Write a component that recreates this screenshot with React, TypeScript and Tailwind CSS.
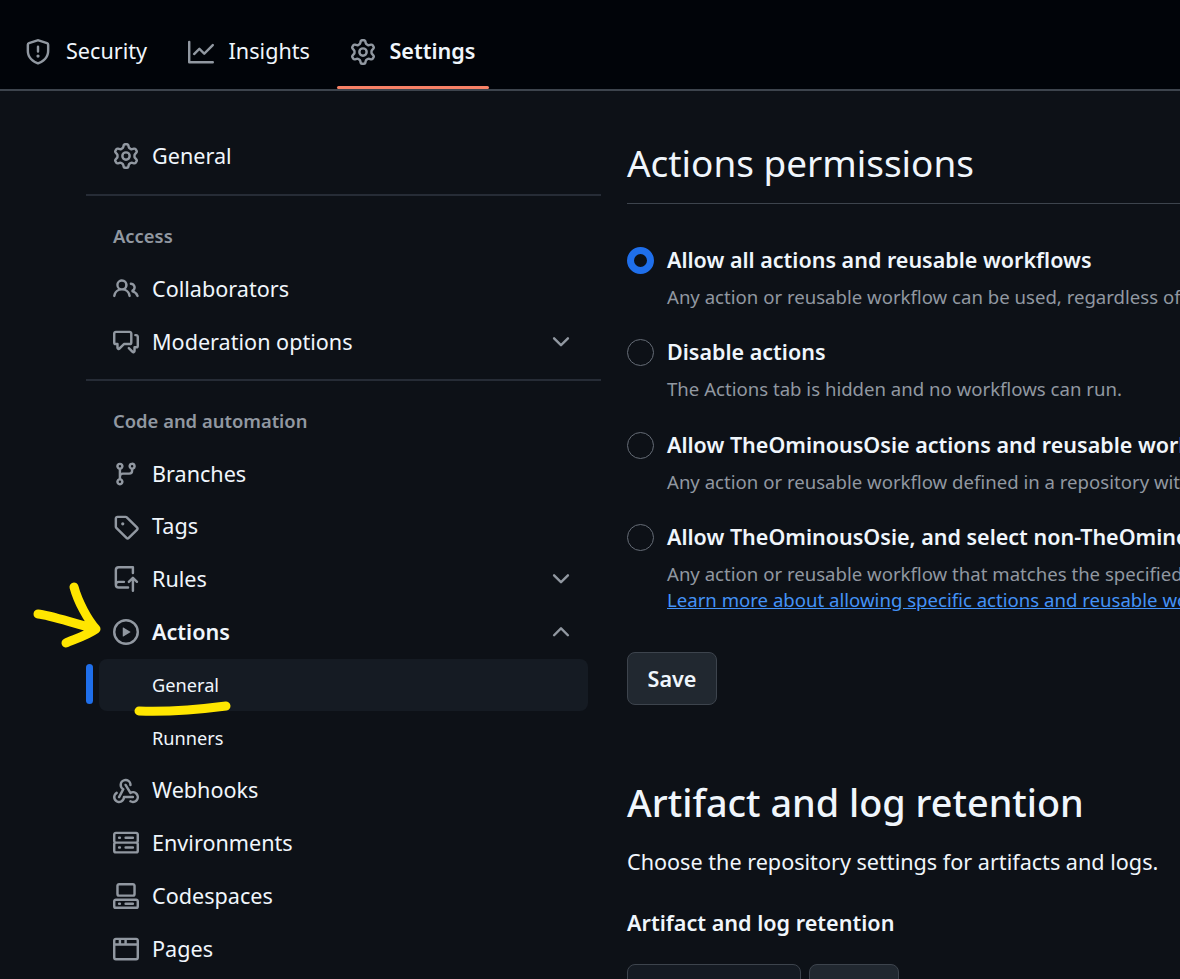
import type { ReactNode } from "react"

// octicons, 16px grid
const icons: Record<string, string[]> = {
  shield: ["M7.467.133a1.748 1.748 0 0 1 1.066 0l5.25 1.68A1.75 1.75 0 0 1 15 3.48V7c0 1.566-.32 3.182-1.303 4.682-.983 1.498-2.585 2.813-5.032 3.855a1.697 1.697 0 0 1-1.33 0c-2.447-1.042-4.049-2.357-5.032-3.855C1.32 10.182 1 8.566 1 7V3.48a1.75 1.75 0 0 1 1.217-1.667Zm.61 1.429a.25.25 0 0 0-.153 0l-5.25 1.68a.25.25 0 0 0-.174.238V7c0 1.358.275 2.666 1.057 3.86.784 1.194 2.121 2.34 4.366 3.297a.196.196 0 0 0 .154 0c2.245-.956 3.582-2.104 4.366-3.298C13.225 9.666 13.5 8.36 13.5 7V3.48a.251.251 0 0 0-.174-.237l-5.25-1.68ZM8.75 4.75v3a.75.75 0 0 1-1.5 0v-3a.75.75 0 0 1 1.5 0ZM9 10.5a1 1 0 1 1-2 0 1 1 0 0 1 2 0Z"],
  graph: ["M1.5 1.75V13.5h13.75a.75.75 0 0 1 0 1.5H.75a.75.75 0 0 1-.75-.75V1.75a.75.75 0 0 1 1.5 0Zm14.28 2.53-5.25 5.25a.75.75 0 0 1-1.06 0L7 7.06 4.28 9.78a.751.751 0 0 1-1.042-.018.751.751 0 0 1-.018-1.042l3.25-3.25a.75.75 0 0 1 1.06 0L10 7.94l4.72-4.72a.751.751 0 0 1 1.042.018.751.751 0 0 1 .018 1.042Z"],
  gear: ["M8 0a8.2 8.2 0 0 1 .701.031C9.444.095 9.99.645 10.16 1.29l.288 1.107c.018.066.079.158.212.224.231.114.454.243.668.386.123.082.233.09.299.071l1.103-.303c.644-.176 1.392.021 1.82.63.27.385.506.792.704 1.218.315.675.111 1.422-.364 1.891l-.814.806c-.049.048-.098.147-.088.294.016.257.016.515 0 .772-.01.147.038.246.088.294l.814.806c.475.469.679 1.216.364 1.891a7.977 7.977 0 0 1-.704 1.217c-.428.61-1.176.807-1.82.63l-1.102-.302c-.067-.019-.177-.011-.3.071a5.909 5.909 0 0 1-.668.386c-.133.066-.194.158-.211.224l-.29 1.106c-.168.646-.715 1.196-1.458 1.26a8.006 8.006 0 0 1-1.402 0c-.743-.064-1.289-.614-1.458-1.26l-.289-1.106c-.018-.066-.079-.158-.212-.224a5.738 5.738 0 0 1-.668-.386c-.123-.082-.233-.09-.299-.071l-1.103.303c-.644.176-1.392-.021-1.82-.63a8.12 8.12 0 0 1-.704-1.218c-.315-.675-.111-1.422.363-1.891l.815-.806c.05-.048.098-.147.088-.294a6.214 6.214 0 0 1 0-.772c.01-.147-.038-.246-.088-.294l-.815-.806C.635 6.045.431 5.298.746 4.623a7.92 7.92 0 0 1 .704-1.217c.428-.61 1.176-.807 1.82-.63l1.102.302c.067.019.177.011.3-.071.214-.143.437-.272.668-.386.133-.066.194-.158.211-.224l.29-1.106C6.009.645 6.556.095 7.299.03 7.53.01 7.764 0 8 0Zm-.571 1.525c-.036.003-.108.036-.137.146l-.289 1.105c-.147.561-.549.967-.998 1.189-.173.086-.34.183-.5.29-.417.278-.97.423-1.529.27l-1.103-.303c-.109-.03-.175.016-.195.045-.22.312-.412.644-.573.99-.014.031-.021.11.059.19l.815.806c.411.406.562.957.53 1.456a4.709 4.709 0 0 0 0 .582c.032.499-.119 1.05-.53 1.456l-.815.806c-.081.08-.073.159-.059.19.162.346.353.677.573.989.02.03.085.076.195.046l1.102-.303c.56-.153 1.113-.008 1.53.27.161.107.328.204.501.29.447.222.85.629.997 1.189l.289 1.105c.029.109.101.143.137.146a6.6 6.6 0 0 0 1.142 0c.036-.003.108-.036.137-.146l.289-1.105c.147-.561.549-.967.998-1.189.173-.086.34-.183.5-.29.417-.278.97-.423 1.529-.27l1.103.303c.109.029.175-.016.195-.045.22-.313.411-.644.573-.99.014-.031.021-.11-.059-.19l-.815-.806c-.411-.406-.562-.957-.53-1.456a4.709 4.709 0 0 0 0-.582c-.032-.499.119-1.05.53-1.456l.815-.806c.081-.08.073-.159.059-.19a6.464 6.464 0 0 0-.573-.989c-.02-.03-.085-.076-.195-.046l-1.102.303c-.56.153-1.113.008-1.53-.27a4.44 4.44 0 0 0-.501-.29c-.447-.222-.85-.629-.997-1.189l-.289-1.105c-.029-.11-.101-.143-.137-.146a6.6 6.6 0 0 0-1.142 0ZM11 8a3 3 0 1 1-6 0 3 3 0 0 1 6 0ZM9.5 8a1.5 1.5 0 1 0-3.001.001A1.5 1.5 0 0 0 9.5 8Z"],
  people: ["M2 5.5a3.5 3.5 0 1 1 5.898 2.549 5.508 5.508 0 0 1 3.034 4.084.75.75 0 1 1-1.482.235 4 4 0 0 0-7.9 0 .75.75 0 0 1-1.482-.236A5.507 5.507 0 0 1 3.102 8.05 3.493 3.493 0 0 1 2 5.5ZM11 4a3.001 3.001 0 0 1 2.22 5.018 5.01 5.01 0 0 1 2.56 3.012.749.749 0 0 1-.885.954.752.752 0 0 1-.549-.514 3.507 3.507 0 0 0-2.522-2.372.75.75 0 0 1-.574-.73v-.352a.75.75 0 0 1 .416-.672A1.5 1.5 0 0 0 11 5.5.75.75 0 0 1 11 4Zm-5.5-.5a2 2 0 1 0-.001 3.999A2 2 0 0 0 5.5 3.5Z"],
  discussion: ["M1.75 1h8.5c.966 0 1.75.784 1.75 1.75v5.5A1.75 1.75 0 0 1 10.25 10H7.061l-2.574 2.573A1.458 1.458 0 0 1 2 11.543V10h-.25A1.75 1.75 0 0 1 0 8.25v-5.5C0 1.784.784 1 1.75 1ZM1.5 2.75v5.5c0 .138.112.25.25.25h1a.75.75 0 0 1 .75.75v2.19l2.72-2.72a.749.749 0 0 1 .53-.22h3.5a.25.25 0 0 0 .25-.25v-5.5a.25.25 0 0 0-.25-.25h-8.5a.25.25 0 0 0-.25.25Zm13 2a.25.25 0 0 0-.25-.25h-.5a.75.75 0 0 1 0-1.5h.5c.966 0 1.75.784 1.75 1.75v5.5A1.75 1.75 0 0 1 14.25 12H14v1.543a1.458 1.458 0 0 1-2.487 1.03L9.22 12.28a.749.749 0 0 1 .326-1.275.749.749 0 0 1 .734.215l2.22 2.22v-2.19a.75.75 0 0 1 .75-.75h1a.25.25 0 0 0 .25-.25Z"],
  branch: ["M9.5 3.25a2.25 2.25 0 1 1 3 2.122V6A2.5 2.5 0 0 1 10 8.5H6a1 1 0 0 0-1 1v1.128a2.251 2.251 0 1 1-1.5 0V5.372a2.25 2.25 0 1 1 1.5 0v1.836A2.493 2.493 0 0 1 6 7h4a1 1 0 0 0 1-1v-.628A2.25 2.25 0 0 1 9.5 3.25Zm-6 0a.75.75 0 1 0 1.5 0 .75.75 0 0 0-1.5 0Zm8.25-.75a.75.75 0 1 0 0 1.5.75.75 0 0 0 0-1.5ZM4.25 12a.75.75 0 1 0 0 1.5.75.75 0 0 0 0-1.5Z"],
  tag: ["M1 7.775V2.75C1 1.784 1.784 1 2.75 1h5.025c.464 0 .91.184 1.238.513l6.25 6.25a1.75 1.75 0 0 1 0 2.474l-5.026 5.026a1.75 1.75 0 0 1-2.474 0l-6.25-6.25A1.752 1.752 0 0 1 1 7.775Zm1.5 0c0 .066.026.13.073.177l6.25 6.25a.25.25 0 0 0 .354 0l5.025-5.025a.25.25 0 0 0 0-.354l-6.25-6.25a.25.25 0 0 0-.177-.073H2.75a.25.25 0 0 0-.25.25ZM6 5a1 1 0 1 1 0 2 1 1 0 0 1 0-2Z"],
  repoPush: ["M1 2.5A2.5 2.5 0 0 1 3.5 0h8.75a.75.75 0 0 1 .75.75v3.5a.75.75 0 0 1-1.5 0V1.5h-8a1 1 0 0 0-1 1v6.708A2.492 2.492 0 0 1 3.5 9h3.25a.75.75 0 0 1 0 1.5H3.5a1 1 0 0 0 0 2h5.75a.75.75 0 0 1 0 1.5H3.5A2.5 2.5 0 0 1 1 11.5Zm13.23 7.79h-.001l-1.224-1.224v6.184a.75.75 0 0 1-1.5 0V9.066L10.28 10.29a.75.75 0 0 1-1.06-1.061l2.505-2.504a.75.75 0 0 1 1.06 0L15.29 9.23a.751.751 0 0 1-.018 1.042.751.751 0 0 1-1.042.018Z"],
  play: ["M8 0a8 8 0 1 1 0 16A8 8 0 0 1 8 0ZM1.5 8a6.5 6.5 0 1 0 13 0 6.5 6.5 0 0 0-13 0Zm4.879-2.773 4.264 2.559a.25.25 0 0 1 0 .428l-4.264 2.559A.25.25 0 0 1 6 10.559V5.442a.25.25 0 0 1 .379-.215Z"],
  webhook: [
    "M5.5 4.25a2.25 2.25 0 0 1 4.5 0 .75.75 0 0 0 1.5 0 3.75 3.75 0 1 0-6.14 2.889l-2.272 4.258a.75.75 0 0 0 1.324.706L7 7.25a.75.75 0 0 0-.309-1.015A2.25 2.25 0 0 1 5.5 4.25Z",
    "M7.364 3.607a.75.75 0 0 1 1.03.257l2.608 4.349a3.75 3.75 0 1 1-.628 6.785.75.75 0 0 1 .752-1.299 2.25 2.25 0 1 0-.033-3.88.75.75 0 0 1-1.03-.256L7.107 4.636a.75.75 0 0 1 .257-1.03Z",
    "M2.9 8.776A.75.75 0 0 1 2.625 9.8 2.25 2.25 0 1 0 6 11.75a.75.75 0 0 1 .75-.751h5.5a.75.75 0 0 1 0 1.5H7.425a3.751 3.751 0 1 1-5.55-3.998.75.75 0 0 1 1.024.274Z",
  ],
  server: ["M1.75 1h12.5c.966 0 1.75.784 1.75 1.75v4c0 .372-.116.717-.314 1 .198.283.314.628.314 1v4a1.75 1.75 0 0 1-1.75 1.75H1.75A1.75 1.75 0 0 1 0 12.75v-4c0-.358.109-.707.314-1a1.739 1.739 0 0 1-.314-1v-4C0 1.784.784 1 1.75 1ZM1.5 2.75v4c0 .138.112.25.25.25h12.5a.25.25 0 0 0 .25-.25v-4a.25.25 0 0 0-.25-.25H1.75a.25.25 0 0 0-.25.25Zm.25 5.75a.25.25 0 0 0-.25.25v4c0 .138.112.25.25.25h12.5a.25.25 0 0 0 .25-.25v-4a.25.25 0 0 0-.25-.25ZM7 4.75A.75.75 0 0 1 7.75 4h4.5a.75.75 0 0 1 0 1.5h-4.5A.75.75 0 0 1 7 4.75ZM7.75 10h4.5a.75.75 0 0 1 0 1.5h-4.5a.75.75 0 0 1 0-1.5ZM3 4.75A.75.75 0 0 1 3.75 4h.5a.75.75 0 0 1 0 1.5h-.5A.75.75 0 0 1 3 4.75ZM3.75 10h.5a.75.75 0 0 1 0 1.5h-.5a.75.75 0 0 1 0-1.5Z"],
  codespaces: [
    "M0 11.25c0-.966.784-1.75 1.75-1.75h12.5c.966 0 1.75.784 1.75 1.75v3A1.75 1.75 0 0 1 14.25 16H1.75A1.75 1.75 0 0 1 0 14.25Zm2-9.5C2 .784 2.784 0 3.75 0h8.5C13.216 0 14 .784 14 1.75v5a1.75 1.75 0 0 1-1.75 1.75h-8.5A1.75 1.75 0 0 1 2 6.75Zm1.75-.25a.25.25 0 0 0-.25.25v5c0 .138.112.25.25.25h8.5a.25.25 0 0 0 .25-.25v-5a.25.25 0 0 0-.25-.25Zm-2 9.5a.25.25 0 0 0-.25.25v3c0 .138.112.25.25.25h12.5a.25.25 0 0 0 .25-.25v-3a.25.25 0 0 0-.25-.25Z",
    "M7 12.75a.75.75 0 0 1 .75-.75h4.5a.75.75 0 0 1 0 1.5h-4.5a.75.75 0 0 1-.75-.75Zm-4 0a.75.75 0 0 1 .75-.75h.5a.75.75 0 0 1 0 1.5h-.5a.75.75 0 0 1-.75-.75Z",
  ],
  browser: ["M0 2.75C0 1.784.784 1 1.75 1h12.5c.966 0 1.75.784 1.75 1.75v10.5A1.75 1.75 0 0 1 14.25 15H1.75A1.75 1.75 0 0 1 0 13.25ZM14.5 6h-13v7.25c0 .138.112.25.25.25h12.5a.25.25 0 0 0 .25-.25Zm-6-3.5v2h6V2.75a.25.25 0 0 0-.25-.25ZM5 2.5v2h2v-2Zm-3.25 0a.25.25 0 0 0-.25.25V4.5h2v-2Z"],
  chevronDown: ["M12.78 5.22a.749.749 0 0 1 0 1.06l-4.25 4.25a.749.749 0 0 1-1.06 0L3.22 6.28a.749.749 0 1 1 1.06-1.06L8 8.939l3.72-3.719a.749.749 0 0 1 1.06 0Z"],
  chevronUp: ["M3.22 10.53a.749.749 0 0 1 0-1.06l4.25-4.25a.749.749 0 0 1 1.06 0l4.25 4.25a.749.749 0 1 1-1.06 1.06L8 6.811 4.28 10.53a.749.749 0 0 1-1.06 0Z"],
}

function Octicon({ name, className }: { name: string; className?: string }) {
  return (
    <svg width="26" height="26" viewBox="0 0 16 16" fill="currentColor" className={`block ${className ?? ""}`}>
      {icons[name].map((d) => <path key={d} d={d} />)}
    </svg>
  )
}

function TopTab({ icon, label, active }: { icon: ReactNode; label: string; active?: boolean }) {
  return (
    <div className={`relative flex h-full items-center px-[13px] pt-[14px] text-[#f0f6fc] ${active ? "gap-[13px]" : "gap-[15px]"}`}>
      <span className="text-[#9198a1]">{icon}</span>
      <span className={active ? "font-semibold" : ""}>{label}</span>
      {active && <span className="absolute bottom-0 left-0 right-0 h-[3px] rounded-full bg-[#f78166]" />}
    </div>
  )
}

function SideItem({ icon, label, chevron, bold }: { icon?: string; label: string; chevron?: "up" | "down"; bold?: boolean }) {
  return (
    <div className="flex h-[52.8px] items-center px-[27px] text-[#f0f6fc]">
      <span className="flex w-[39px] shrink-0 text-[#9198a1]">{icon && <Octicon name={icon} />}</span>
      <span className={bold ? "font-semibold" : ""}>{label}</span>
      {chevron === "down" && <Octicon name="chevronDown" className="ml-auto text-[#9198a1]" />}
      {chevron === "up" && <Octicon name="chevronUp" className="ml-auto text-[#9198a1]" />}
    </div>
  )
}

function SubItem({ label, active }: { label: string; active?: boolean }) {
  return (
    <div className="relative h-[52.8px]">
      {active && <span className="absolute left-0 top-[5px] h-[40px] w-[7px] rounded-full bg-[#1f6feb]" />}
      <div className={`ml-[13px] mr-[13px] flex h-full items-center rounded-[8px] pl-[53px] pt-[2px] text-[18.2px] text-[#f0f6fc] ${active ? "bg-[#151b23]" : ""}`}>
        {label}
      </div>
    </div>
  )
}

function SideLabel({ label }: { label: string }) {
  return <div className="px-[27px] text-[18.4px] font-semibold leading-[22px] text-[#9198a1]">{label}</div>
}

function RadioOption({ title, note, checked, link, className }: { title: string; note: string; checked?: boolean; link?: string; className?: string }) {
  return (
    <div className={`flex gap-[13px] ${className ?? ""}`}>
      {checked ? (
        <span className="mt-[-13px] h-[27px] w-[27px] shrink-0 rounded-full border-[7px] border-[#1f6feb] bg-[#0d1117]" />
      ) : (
        <span className="mt-[-13px] h-[27px] w-[27px] shrink-0 rounded-full border border-[#656c76]" />
      )}
      <div className="mt-[-14px] whitespace-nowrap">
        <div className="text-[21.5px] font-semibold leading-[28px] text-[#f0f6fc]">{title}</div>
        <div className="mt-[10px] text-[18.6px] leading-[26px] text-[#9198a1]">{note}</div>
        {link && <div className="text-[18.6px] leading-[26px] text-[#4493f8] underline">{link}</div>}
      </div>
    </div>
  )
}

export default function App() {
  return (
    <div className="relative h-[979px] w-[1180px] overflow-hidden bg-[#0d1117] text-[21.6px]" style={{ fontFamily: '"Noto Sans", sans-serif' }}>
      <header className="flex h-[91px] items-stretch border-b-2 border-[#3d444d] bg-[#010409] pl-[12px]">
        <div className="flex h-[89px] gap-[14.5px]">
          <TopTab icon={<Octicon name="shield" />} label="Security" />
          <TopTab icon={<Octicon name="graph" />} label="Insights" />
          <TopTab icon={<Octicon name="gear" />} label="Settings" active />
        </div>
      </header>

      <div className="flex">
        <aside className="ml-[86px] w-[515px] shrink-0 pt-[39px]">
          <SideItem icon="gear" label="General" />
          <div className="mt-[11px] h-[2px] bg-[#262c36]" />
          <div className="mt-[29px]"><SideLabel label="Access" /></div>
          <div className="mt-[16px]">
            <SideItem icon="people" label="Collaborators" />
            <SideItem icon="discussion" label="Moderation options" chevron="down" />
          </div>
          <div className="mt-[11px] h-[2px] bg-[#262c36]" />
          <div className="mt-[29px]"><SideLabel label="Code and automation" /></div>
          <div className="mt-[15px]">
            <SideItem icon="branch" label="Branches" />
            <SideItem icon="tag" label="Tags" />
            <SideItem icon="repoPush" label="Rules" chevron="down" />
            <SideItem icon="play" label="Actions" chevron="up" bold />
            <SubItem label="General" active />
            <SubItem label="Runners" />
            <SideItem icon="webhook" label="Webhooks" />
            <SideItem icon="server" label="Environments" />
            <SideItem icon="codespaces" label="Codespaces" />
            <SideItem icon="browser" label="Pages" />
          </div>
        </aside>

        <main className="ml-[26px] w-[700px] shrink-0 text-[#f0f6fc]">
          <h2 className="mt-[46px] h-[67px] border-b border-[#3d444d] text-[36.9px] leading-[52px]">Actions permissions</h2>
          <RadioOption className="mt-[56px]" checked title="Allow all actions and reusable workflows" note="Any action or reusable workflow can be used, regardless of who authored it or where it is defined." />
          <RadioOption className="mt-[42px]" title="Disable actions" note="The Actions tab is hidden and no workflows can run." />
          <RadioOption className="mt-[43px]" title="Allow TheOminousOsie actions and reusable workflows" note="Any action or reusable workflow defined in a repository within TheOminousOsie can be used." />
          <RadioOption className="mt-[42px]" title="Allow TheOminousOsie, and select non-TheOminousOsie, actions and reusable workflows" note="Any action or reusable workflow that matches the specified criteria, plus those defined in a repository." link="Learn more about allowing specific actions and reusable workflows to run." />
          <button className="mt-[39px] block h-[53px] w-[90px] rounded-[8px] border border-[#3d444d] bg-[#212830] pt-[2px] font-semibold text-[#f0f6fc]">Save</button>
          <h2 className="mt-[73px] text-[37.8px] font-medium leading-[50px]">Artifact and log retention</h2>
          <p className="mt-[20px] leading-[28px]">Choose the repository settings for artifacts and logs.</p>
          <h3 className="mt-[33px] font-semibold leading-[28px]">Artifact and log retention</h3>
          <div className="mt-[27px] flex gap-[8px]">
            <div className="h-[60px] w-[174px] rounded-[8px] border border-[#3d444d] bg-[#151b23]" />
            <div className="h-[60px] w-[90px] rounded-[8px] border border-[#3d444d] bg-[#212830]" />
          </div>
        </main>
      </div>

      {/* yellow annotation marks */}
      <svg className="absolute left-0 top-0 pointer-events-none" width="300" height="730" fill="none" stroke="#ffe600" strokeLinecap="round" strokeLinejoin="round">
        <path strokeWidth="9" d="M38 614 C50 615 72 623 96 629 M74 587 C78 602 88 620 96 629 C86 636 72 640 66 643" />
        <path strokeWidth="9" d="M139 711 C165 712 195 710 226 706" />
      </svg>
    </div>
  )
}
